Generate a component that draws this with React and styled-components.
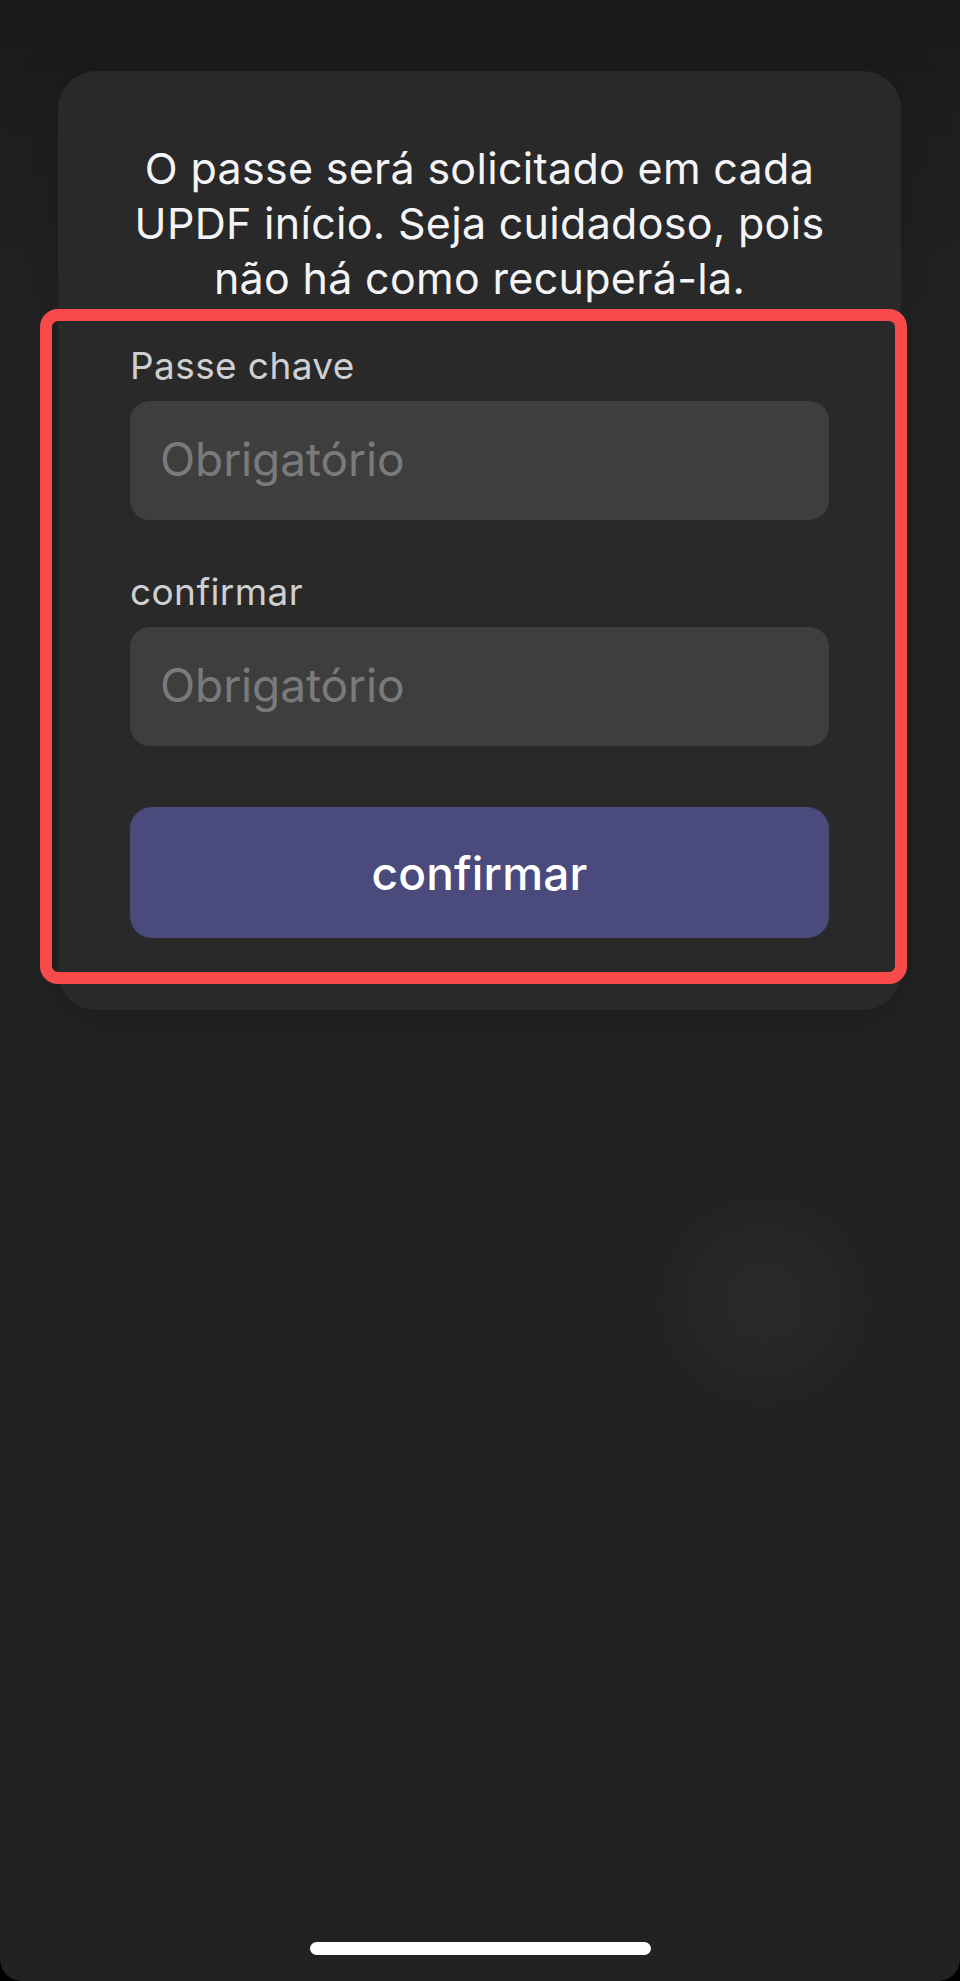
import React from "react";
import styled, { createGlobalStyle } from "styled-components";

const GlobalStyle = createGlobalStyle`
  html, body {
    margin: 0;
    padding: 0;
    background: #000;
  }
  body {
    font-family: Inter, "Noto Sans", "Liberation Sans", sans-serif;
    -webkit-font-smoothing: antialiased;
  }
  * { box-sizing: border-box; }
`;

const Screen = styled.div`
  position: relative;
  width: 960px;
  height: 1981px;
  display: flex;
  flex-direction: column;
  overflow: hidden;
  border-radius: 0 0 22px 22px;
  background:
    radial-gradient(circle at 764px 1301px, rgba(255,255,255,0.035) 0, rgba(255,255,255,0.02) 60px, rgba(255,255,255,0) 110px),
    linear-gradient(180deg, #191919 0px, #1e1e1e 120px, #222222 300px, #222222 100%);
`;

const Card = styled.section`
  position: relative;
  margin: 71px 0 0 58px;
  width: 843px;
  padding: 70px 72px 72px;
  background: #292929;
  border-radius: 38px;
  box-shadow: 0 10px 60px rgba(0, 0, 0, 0.18);
  display: flex;
  flex-direction: column;
`;

const Message = styled.p`
  margin: 0 0 38px;
  color: #f4f4f6;
  font-size: 43px;
  line-height: 55px;
  font-weight: 400;
  text-align: center;
  letter-spacing: 0.3px;
`;

const Form = styled.form`
  display: flex;
  flex-direction: column;
`;

const Label = styled.label`
  display: block;
  color: #cfcfd2;
  font-size: 37px;
  line-height: 44px;
  margin-bottom: 13px;
  letter-spacing: 0.4px;
`;

const Input = styled.input`
  display: block;
  width: 100%;
  height: 119px;
  border: none;
  outline: none;
  border-radius: 20px;
  background: #3e3e3e;
  padding: 0 30px 4px;
  color: #f4f4f6;
  font-family: inherit;
  font-size: 46px;
  letter-spacing: -0.1px;
  margin-bottom: ${(p) => p.$gap}px;
  &::placeholder {
    color: #7a7a7c;
  }
`;

const Button = styled.button`
  display: block;
  width: 100%;
  height: 131px;
  border: none;
  border-radius: 22px;
  background: #4a4a7c;
  color: #ffffff;
  font-family: inherit;
  font-size: 46px;
  font-weight: 500;
  letter-spacing: 0.2px;
  cursor: pointer;
`;

const Highlight = styled.div`
  position: absolute;
  left: -18px;
  top: 238px;
  width: 867px;
  height: 675px;
  border: 12px solid #f84a49;
  border-radius: 18px;
  pointer-events: none;
`;

const HomeIndicator = styled.div`
  margin: auto auto 26px;
  width: 341px;
  height: 13px;
  border-radius: 7px;
  background: #ffffff;
`;

export default function App() {
  return (
    <>
      <GlobalStyle />
      <Screen>
        <Card>
          <Message>
            O passe será solicitado em cada
            <br />
            UPDF início. Seja cuidadoso, pois
            <br />
            não há como recuperá-la.
          </Message>
          <Form onSubmit={(e) => e.preventDefault()}>
            <Label htmlFor="pass">Passe chave</Label>
            <Input id="pass" type="password" placeholder="Obrigatório" $gap={50} />
            <Label htmlFor="confirm">confirmar</Label>
            <Input id="confirm" type="password" placeholder="Obrigatório" $gap={61} />
            <Button type="submit">confirmar</Button>
          </Form>
          <Highlight />
        </Card>
        <HomeIndicator />
      </Screen>
    </>
  );
}
